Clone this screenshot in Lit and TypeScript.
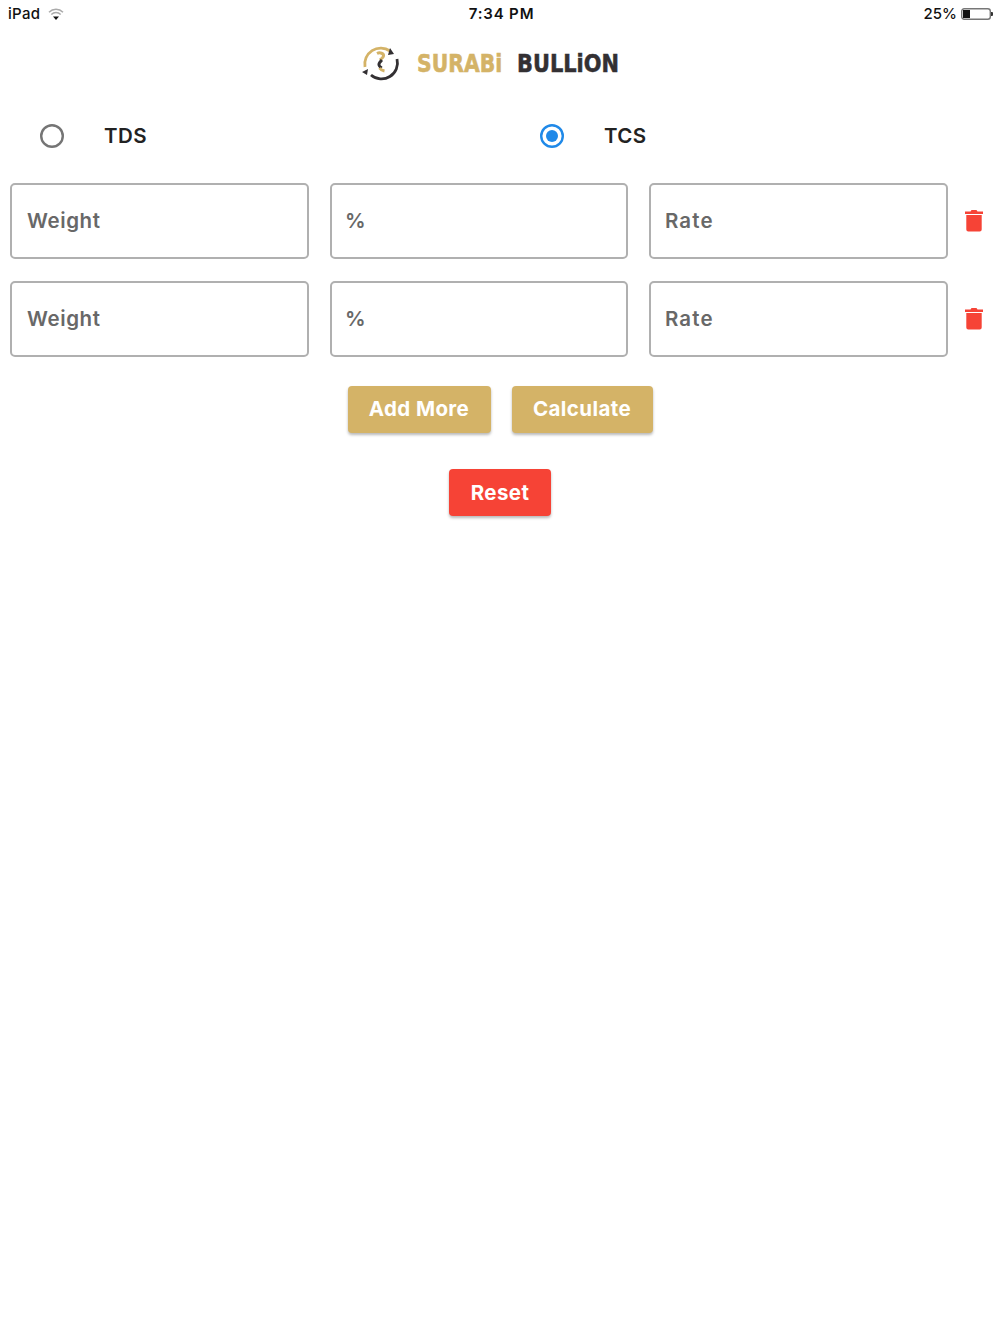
import { LitElement, html, css } from "lit";
import { customElement } from "lit/decorators.js";

@customElement("app-root")
export class AppRoot extends LitElement {
  static styles = css`
    :host { display: block; width: 1000px; height: 1334px; background: #fff; font-family: Inter, "Liberation Sans", sans-serif; overflow: hidden; }
    .status { height: 27px; display: grid; grid-template-columns: 1fr auto 1fr; align-items: center; padding: 0 8px; font-size: 15px; font-weight: 500; color: #111; letter-spacing: .3px; }
    .status .left { display: flex; align-items: center; gap: 8px; }
    .status .time { font-weight: 600; padding-left: 3px; letter-spacing: .85px; }
    .status .right { display: flex; justify-content: flex-end; align-items: center; gap: 4px; letter-spacing: 0; }
    .logo { height: 46px; margin-top: 13px; display: flex; align-items: center; padding-left: 357px; }
    .brand { display: block; font-family: "DejaVu Sans", sans-serif; font-weight: 700; line-height: 46px; white-space: nowrap; transform-origin: left center; -webkit-text-stroke: .5px currentColor; }
    .gold { color: #d4b367; margin-left: 14px; width: 85px; font-size: 21px; transform: translateY(1px) scale(.97, 1.18); }
    .dark { color: #333033; margin-left: 15px; width: 102px; font-size: 22px; transform: translateY(1px) scale(.95, 1.13); }
    .radios { display: grid; grid-template-columns: 500px 500px; margin-top: 32px; height: 36px; }
    .radio { display: flex; align-items: center; padding-left: 40px; gap: 41px; font-size: 20.5px; font-weight: 600; color: #222; letter-spacing: .4px; }
    .radio span { margin: -2px 0 0 -1px; }
    .rows { display: flex; flex-direction: column; gap: 22px; padding: 19px 0 0 10px; margin-top: 10px; }
    .row { display: flex; align-items: center; gap: 21px; height: 76px; }
    .field { box-sizing: border-box; width: 298px; height: 76px; border: 2px solid #b0b0b0; border-radius: 5px; padding: 0 0 1px 13px; display: flex; align-items: center; font-size: 20.5px; font-weight: 600; color: #686868; letter-spacing: .6px; }
    .field.first { width: 299px; padding-left: 15px; }
    .field.last { width: 299px; padding-left: 14px; letter-spacing: 1.1px; }
    .row .trash { margin-left: -7px; width: 24px; display: flex; justify-content: center; padding-bottom: 2px; }
    .actions { display: flex; justify-content: center; gap: 21px; margin-top: 29px; }
    .btn { height: 47px; box-sizing: border-box; border-radius: 4px; display: flex; align-items: center; justify-content: center; color: #fff; font-size: 20.5px; font-weight: 700; letter-spacing: .4px; padding-bottom: 1px; box-shadow: 0 2px 3px rgba(0,0,0,.28); }
    .gbtn { background: #d4b367; padding-bottom: 2px; }
    .add { width: 143px; }
    .calc { width: 141px; }
    .reset-wrap { display: flex; justify-content: center; margin-top: 36px; }
    .reset { width: 102px; background: #f64336; }
    .batt { width: 32px; height: 12px; display: block; margin-right: -1px; }
  `;

  row() {
    return html`<div class="row">
      <div class="field first">Weight</div>
      <div class="field">%</div>
      <div class="field last">Rate</div>
      <div class="trash">
        <svg width="20" height="24" viewBox="0 0 20 24"><path fill="#f64336" d="M1 3.500h5.500L7.500 2h5l1 1.500H19V6H1zM2.300 7h15.400v14.500a2 2 0 0 1-2 2H4.300a2 2 0 0 1-2-2z"/></svg>
      </div>
    </div>`;
  }

  render() {
    return html`
      <div class="status">
        <div class="left"><span>iPad</span>
          <svg width="16" height="12" viewBox="0 0 16 12"><path d="M1 4.200a10 10 0 0 1 14 0M3.300 6.500a6.800 6.800 0 0 1 9.400 0" fill="none" stroke="#aaa" stroke-width="1.500"/><path d="M5 8.500h6l-3 3.500z" fill="#111"/></svg>
        </div>
        <div class="time">7:34 PM</div>
        <div class="right"><span>25%</span>
          <svg class="batt" viewBox="0 0 32 12"><rect x=".7" y=".7" width="28.600" height="10.600" rx="2.500" fill="#fff" stroke="#777" stroke-width="1.400"/><rect x="2" y="2" width="7" height="8" fill="#111"/><path d="M30 4h1a1 1 0 0 1 1 1v2a1 1 0 0 1-1 1h-1z" fill="#333"/></svg>
        </div>
      </div>
      <div class="logo">
        <svg width="46" height="46" viewBox="0 0 46 46">
          <path d="M8 27A16 16 0 0 1 33 11" fill="none" stroke="#d4b367" stroke-width="2.800"/>
          <path d="M40 19A16 16 0 0 1 14 35" fill="none" stroke="#333033" stroke-width="2.800"/>
          <path d="M33 8l4 6-6 1zM10 35l-5-3 6-3z" fill="#333033"/>
          <path d="M20 13.500c3-1.500 7 0 6.500 2.500-.3 2-2.500 3-3.500 4" fill="none" stroke="#d4b367" stroke-width="3"/>
          <path d="M25 20c-2 2-3.500 3-3 5 .3 1.500 1.500 2 2.500 3" fill="none" stroke="#333033" stroke-width="3"/>
          <path d="M22.500 28c1 1.500 2.500 2.500 5 3" fill="none" stroke="#d4b367" stroke-width="3"/>
        </svg>
        <span class="brand gold">SURABi</span>
        <span class="brand dark">BULLiON</span>
      </div>
      <div class="radios">
        <div class="radio">
          <svg width="24" height="24" viewBox="0 0 24 24"><circle cx="12" cy="12" r="10.800" fill="none" stroke="#757575" stroke-width="2.400"/></svg>
          <span>TDS</span>
        </div>
        <div class="radio">
          <svg width="24" height="24" viewBox="0 0 24 24"><circle cx="12" cy="12" r="10.800" fill="none" stroke="#2089e8" stroke-width="2.400"/><circle cx="12" cy="12" r="6" fill="#2089e8"/></svg>
          <span>TCS</span>
        </div>
      </div>
      <div class="rows">${this.row()}${this.row()}</div>
      <div class="actions">
        <div class="btn gbtn add">Add More</div>
        <div class="btn gbtn calc">Calculate</div>
      </div>
      <div class="reset-wrap"><div class="btn reset">Reset</div></div>
    `;
  }
}
